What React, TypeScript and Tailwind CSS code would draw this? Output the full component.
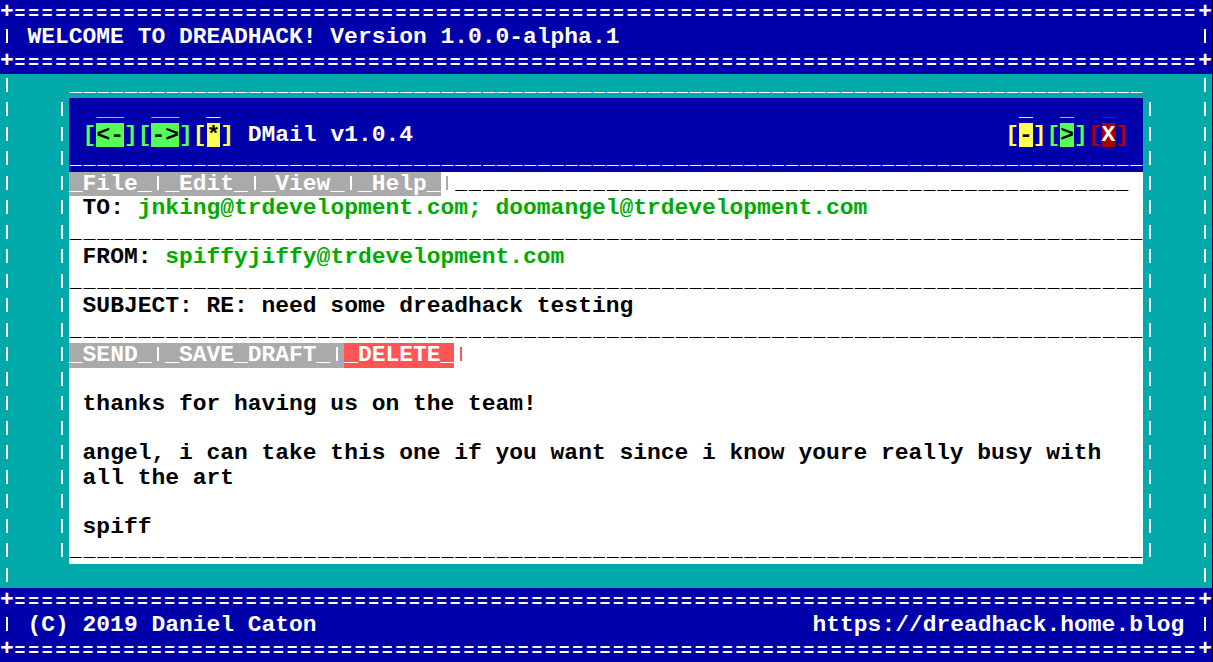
import { Fragment } from "react";

// one text row of the 88 x 27 character screen
const rowCls = "flex h-[24.5px] whitespace-pre";

function Bar({ className = "" }: { className?: string }) {
  return (
    <span className={`flex w-[13.77px] h-[24.5px] shrink-0 justify-center pt-[4px] ${className}`}>
      <span className="w-[2px] h-[14px] bg-current" />
    </span>
  );
}

function Txt({ s, className = "" }: { s: string; className?: string }) {
  const parts = s.split("|");
  return (
    <span className={`flex h-[24.5px] shrink-0 whitespace-pre ${className}`}>
      {parts.map((p, i) => (
        <Fragment key={i}>
          {i > 0 && <Bar />}
          {p && <span>{p}</span>}
        </Fragment>
      ))}
    </span>
  );
}

// underscores drawn a bit narrower than their cell so the line breaks up like the DOS font
function Dashes({ n, className = "" }: { n: number; className?: string }) {
  return (
    <span className={`block h-[24.5px] shrink-0 overflow-hidden whitespace-pre text-[20px] tracking-[1.77px] pl-[0.9px] ${className}`}>
      {"_".repeat(n)}
    </span>
  );
}

function EqLine() {
  return (
    <div className="flex h-[24.5px] whitespace-pre">
      <span className="w-[13.62px] shrink-0">+</span>
      <span className="flex-1 overflow-hidden text-[18px] tracking-[2.8px] pl-[1px] pt-[2px]">
        {"=".repeat(87)}
      </span>
      <span className="w-[13.62px] shrink-0">+</span>
    </div>
  );
}

function Gutter({ side }: { side: "left" | "right" }) {
  return (
    <div className="flex flex-col w-[68.85px] shrink-0 text-white">
      {Array.from({ length: 21 }, (_, i) => {
        const inner = i > 0 && i < 20;
        return (
          <div key={i} className={`flex h-[24.5px] justify-between ${side === "right" ? "flex-row-reverse" : ""}`}>
            <Bar />
            {inner ? <Bar /> : <span className="w-[13.77px]" />}
          </div>
        );
      })}
    </div>
  );
}

function Window() {
  return (
    <div className="flex flex-col w-[1074.06px] shrink-0">
      <Dashes n={78} className="text-white" />

      <div className="bg-[#0000aa] text-white">
        <div className={`${rowCls} justify-between`}>
          <span className="flex">
            <Txt s="  " />
            <Txt s="__" className="text-[#55ff55]" />
            <Txt s="  " />
            <Txt s="__" className="text-[#55ff55]" />
            <Txt s="  " />
            <Txt s="_" className="text-[#ffff55]" />
          </span>
          <span className="flex">
            <Txt s=" " />
            <Txt s="_" className="text-[#ffff55]" />
            <Txt s="  " />
            <Txt s="_" className="text-[#55ff55]" />
            <Txt s="  " />
            <Txt s="_" className="text-[#aa0000]" />
            <Txt s="  " />
          </span>
        </div>
        <div className={`${rowCls} justify-between`}>
          <span className="flex">
            <Txt s=" " />
            <Txt s="[" className="text-[#55ff55]" />
            <Txt s="<-" className="bg-[#55ff55] text-black" />
            <Txt s="][" className="text-[#55ff55]" />
            <Txt s="->" className="bg-[#55ff55] text-black" />
            <Txt s="]" className="text-[#55ff55]" />
            <Txt s="[" className="text-[#ffff55]" />
            <Txt s="*" className="bg-[#ffff55] text-black" />
            <Txt s="]" className="text-[#ffff55]" />
            <Txt s=" DMail v1.0.4" />
          </span>
          <span className="flex">
            <Txt s="[" className="text-[#ffff55]" />
            <Txt s="-" className="bg-[#ffff55] text-black" />
            <Txt s="]" className="text-[#ffff55]" />
            <Txt s="[" className="text-[#55ff55]" />
            <Txt s=">" className="bg-[#55ff55] text-black" />
            <Txt s="]" className="text-[#55ff55]" />
            <Txt s="[" className="text-[#aa0000]" />
            <Txt s="X" className="bg-[#aa0000] text-white" />
            <Txt s="]" className="text-[#aa0000]" />
            <Txt s=" " />
          </span>
        </div>
        <Dashes n={78} />
      </div>

      <div className="bg-white text-black">
        <div className={rowCls}>
          <Txt s="_File_|_Edit_|_View_|_Help_" className="bg-[#aaaaaa] text-white" />
          <Txt s="|" className="text-[#aaaaaa]" />
          <Dashes n={49} className="w-[674.73px]" />
        </div>
        <div className={rowCls}>
          <Txt s=" TO: " />
          <Txt s="jnking@trdevelopment.com; doomangel@trdevelopment.com" className="text-[#00aa00]" />
        </div>
        <Dashes n={78} />
        <div className={rowCls}>
          <Txt s=" FROM: " />
          <Txt s="spiffyjiffy@trdevelopment.com" className="text-[#00aa00]" />
        </div>
        <Dashes n={78} />
        <div className={rowCls}> SUBJECT: RE: need some dreadhack testing</div>
        <Dashes n={78} />
        <div className={rowCls}>
          <Txt s="_SEND_|_SAVE_DRAFT_|" className="bg-[#aaaaaa] text-white" />
          <Txt s="_DELETE_" className="bg-[#ff5555] text-white" />
          <Txt s="|" className="text-[#ff5555]" />
        </div>
        <div className={rowCls} />
        <div className={rowCls}> thanks for having us on the team!</div>
        <div className={rowCls} />
        <div className={rowCls}> angel, i can take this one if you want since i know youre really busy with</div>
        <div className={rowCls}> all the art</div>
        <div className={rowCls} />
        <div className={rowCls}> spiff</div>
        <Dashes n={78} />
      </div>

      <div className="h-[24.5px]" />
    </div>
  );
}

export default function App() {
  return (
    <div className="w-[1213px] h-[662px] overflow-hidden bg-[#05052a] font-['Liberation_Mono',monospace] font-bold text-[22.95px] leading-[24.5px]">
      <div className="flex flex-col w-[1211.76px] h-[662px] bg-[#0000aa] text-white">
        <div className="flex flex-col">
          <EqLine />
          <div className={`${rowCls} justify-between`}>
            <Txt s="| WELCOME TO DREADHACK! Version 1.0.0-alpha.1" />
            <Bar />
          </div>
          <EqLine />
        </div>

        <div className="flex bg-[#00aaaa]">
          <Gutter side="left" />
          <Window />
          <Gutter side="right" />
        </div>

        <div className="flex flex-col">
          <EqLine />
          <div className={`${rowCls} justify-between`}>
            <Txt s="| (C) 2019 Daniel Caton" />
            <Txt s="https://dreadhack.home.blog |" />
          </div>
          <EqLine />
        </div>
      </div>
    </div>
  );
}
